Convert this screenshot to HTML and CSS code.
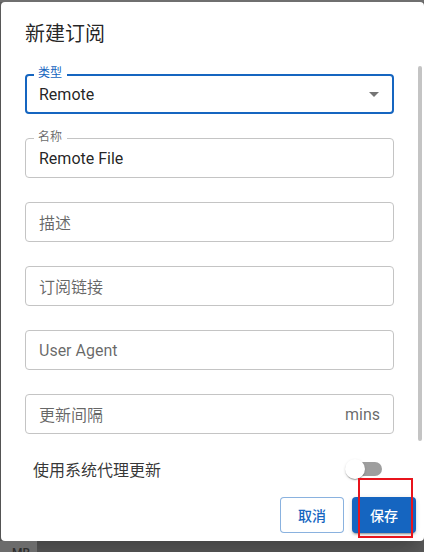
FILE: index.html
```html
<!DOCTYPE html>
<html lang="zh-CN">
<head>
<meta charset="utf-8">
<title>新建订阅</title>
<link rel="stylesheet" href="styles.css">
</head>
<body>
<div class="dialog">
  <div class="title">新建订阅</div>
  <div class="content">
    <div class="form">
      <div class="field focused">
        <span class="label blue">类型</span>
        <span class="value">Remote</span>
        <svg class="arrow" viewBox="0 0 24 24" width="24" height="24"><path d="M7 10l5 5 5-5z"/></svg>
      </div>
      <div class="field">
        <span class="label">名称</span>
        <span class="value">Remote File</span>
      </div>
      <div class="field">
        <span class="placeholder">描述</span>
      </div>
      <div class="field">
        <span class="placeholder">订阅链接</span>
      </div>
      <div class="field">
        <span class="placeholder">User Agent</span>
      </div>
      <div class="field">
        <span class="placeholder">更新间隔</span>
        <span class="suffix">mins</span>
      </div>
      <div class="switch-row">
        <span class="switch-label">使用系统代理更新</span>
        <span class="switch"><span class="track"></span><span class="thumb"></span></span>
      </div>
    </div>
    <div class="scrollbar"><div class="thumb-bar"></div></div>
  </div>
  <div class="actions">
    <button class="btn outlined">取消</button>
    <button class="btn contained">保存</button>
  </div>
</div>
<div class="taskbar"><span class="cell">MB</span></div>
<div class="annotation"></div>
</body>
</html>
```
FILE: styles.css
```css
html, body {
  margin: 0;
  padding: 0;
}
body {
  width: 424px;
  height: 552px;
  overflow: hidden;
  position: relative;
  background: #5e5e5e;
  font-family: Roboto, "Noto Sans CJK SC", sans-serif;
  color: rgba(0, 0, 0, 0.87);
  border-top: 2px solid #6f6f6f;
  box-sizing: border-box;
}
.dialog {
  margin-left: 1px;
  width: 423px;
  height: 539px;
  background: #fff;
  border-radius: 4px;
  display: flex;
  flex-direction: column;
  box-shadow: 0 11px 15px -7px rgba(0,0,0,0.2), 0 24px 38px 3px rgba(0,0,0,0.14);
}
.title {
  padding: 16px 24px;
  font-size: 20px;
  line-height: 32px;
  font-weight: 400;
}
.content {
  flex: 1;
  min-height: 0;
  display: flex;
  overflow: hidden;
}
.form {
  width: 369px;
  padding: 8px 24px 0 24px;
  display: flex;
  flex-direction: column;
  gap: 24px;
}
.field {
  position: relative;
  height: 40px;
  box-sizing: border-box;
  border: 1px solid #c4c4c4;
  border-radius: 4px;
  padding: 0 13px;
  display: flex;
  align-items: center;
  justify-content: space-between;
  font-size: 16px;
  flex-shrink: 0;
}
.field.focused {
  border: 2px solid #1565c0;
  padding: 0 12px;
}
.label {
  position: absolute;
  top: -8px;
  left: 8px;
  padding: 0 5px 0 4px;
  background: #fff;
  font-size: 12px;
  line-height: 12px;
  color: rgba(0, 0, 0, 0.6);
}
.field.focused .label {
  top: -9px;
  left: 7px;
}
.label.blue {
  color: #1565c0;
}
.value {
  color: rgba(0, 0, 0, 0.87);
}
.placeholder {
  color: rgba(0, 0, 0, 0.6);
}
.suffix {
  color: rgba(0, 0, 0, 0.6);
}
.arrow {
  fill: rgba(0, 0, 0, 0.54);
  margin-right: -6px;
}
.switch-row {
  margin-top: -8px;
  height: 38px;
  flex-shrink: 0;
  display: flex;
  align-items: center;
  justify-content: space-between;
  padding: 0 12px 0 8px;
}
.switch-label {
  font-size: 16px;
  color: rgba(0, 0, 0, 0.8);
}
.switch {
  position: relative;
  width: 37px;
  height: 20px;
  display: block;
}
.track {
  display: block;
  margin: 3px 0 0 3px;
  width: 34px;
  height: 14px;
  border-radius: 7px;
  background: rgba(0, 0, 0, 0.38);
}
.thumb {
  position: absolute;
  left: 0;
  top: 0;
  width: 20px;
  height: 20px;
  border-radius: 50%;
  background: #fff;
  box-shadow: 0 2px 1px -1px rgba(0,0,0,0.2), 0 1px 1px 0 rgba(0,0,0,0.14), 0 1px 3px 0 rgba(0,0,0,0.12);
}
.scrollbar {
  width: 6px;
}
.thumb-bar {
  width: 4px;
  height: 375px;
  border-radius: 2px;
  background: #c4c4c4;
}
.actions {
  padding: 8px;
  display: flex;
  justify-content: flex-end;
  gap: 8px;
}
.btn {
  width: 64px;
  height: 36px;
  box-sizing: border-box;
  border-radius: 4px;
  font-family: Roboto, "Noto Sans CJK SC", sans-serif;
  font-size: 14px;
  font-weight: 500;
  cursor: pointer;
}
.outlined {
  background: #fff;
  color: #1565c0;
  border: 1px solid rgba(21, 101, 192, 0.5);
}
.contained {
  background: #1565c0;
  color: #fff;
  border: none;
  box-shadow: 0 3px 1px -2px rgba(0,0,0,0.2), 0 2px 2px 0 rgba(0,0,0,0.14), 0 1px 5px 0 rgba(0,0,0,0.12);
}
.taskbar {
  height: 11px;
  display: flex;
  overflow: hidden;
}
.cell {
  width: 37px;
  background: #6c6c6c;
  color: #2e2e2e;
  font-size: 12px;
  line-height: 12px;
  padding: 6px 0 0 12px;
  box-sizing: border-box;
  font-weight: 500;
}
.annotation {
  position: absolute;
  left: 358px;
  top: 476px;
  width: 55px;
  height: 60px;
  box-sizing: border-box;
  border: 2px solid #e8141c;
}
```
